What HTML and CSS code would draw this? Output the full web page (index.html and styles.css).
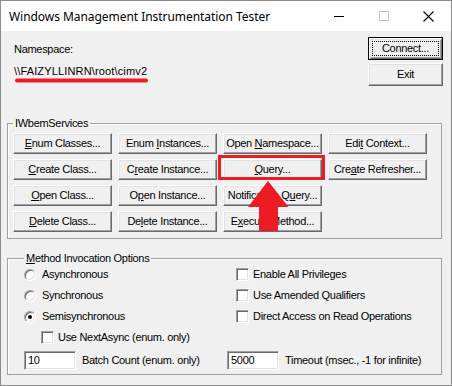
FILE: index.html
```html
<!DOCTYPE html>
<html>
<head>
<meta charset="utf-8">
<link rel="stylesheet" href="styles.css">
</head>
<body>
<div class="window">
  <div class="titlebar">
    <span class="title">Windows Management Instrumentation Tester</span>
    <div class="controls">
      <div class="ctl"><svg width="10" height="10" viewBox="0 0 10 10"><line x1="0" y1="5.5" x2="10" y2="5.5" stroke="#000" stroke-width="1"/></svg></div>
      <div class="ctl"><svg width="10" height="10" viewBox="0 0 10 10"><rect x="0.5" y="0.5" width="9" height="9" fill="none" stroke="#c4c4c4" stroke-width="1"/></svg></div>
      <div class="ctl"><svg width="11" height="11" viewBox="0 0 11 11"><path d="M0.5 0.5 L10.5 10.5 M10.5 0.5 L0.5 10.5" stroke="#000" stroke-width="1.1"/></svg></div>
    </div>
  </div>
  <div class="client">
    <div class="top">
      <div class="ns">
        <div class="ns-label">Namespace:</div>
        <div class="ns-path">\\FAIZYLLINRN\root\cimv2</div>
      </div>
      <div class="side-buttons">
        <button class="btn default"><span>Connect...</span></button>
        <button class="btn"><span>Exit</span></button>
      </div>
    </div>

    <fieldset class="group services">
      <legend>IWbemServices</legend>
      <div class="btn-grid">
        <button class="btn"><span><u>E</u>num Classes...</span></button>
        <button class="btn"><span>Enum <u>I</u>nstances...</span></button>
        <button class="btn"><span>Open <u>N</u>amespace...</span></button>
        <button class="btn"><span>Edi<u>t</u> Context...</span></button>
        <button class="btn"><span><u>C</u>reate Class...</span></button>
        <button class="btn"><span>C<u>r</u>eate Instance...</span></button>
        <button class="btn"><span><u>Q</u>uery...</span></button>
        <button class="btn"><span>Cre<u>a</u>te Refresher...</span></button>
        <button class="btn"><span><u>O</u>pen Class...</span></button>
        <button class="btn"><span>O<u>p</u>en Instance...</span></button>
        <button class="btn"><span>Notification Q<u>u</u>ery...</span></button>
        <span></span>
        <button class="btn"><span><u>D</u>elete Class...</span></button>
        <button class="btn"><span>De<u>l</u>ete Instance...</span></button>
        <button class="btn"><span>E<u>x</u>ecute Method...</span></button>
      </div>
    </fieldset>

    <fieldset class="group options">
      <legend><u>M</u>ethod Invocation Options</legend>
      <div class="opt-rows">
        <div class="opt-row">
          <label class="radio"><span class="rb"></span><span>Asynchronous</span></label>
          <label class="check"><span class="cb"></span><span>Enable All Privileges</span></label>
        </div>
        <div class="opt-row">
          <label class="radio"><span class="rb"></span><span>Synchronous</span></label>
          <label class="check"><span class="cb"></span><span>Use Amended Qualifiers</span></label>
        </div>
        <div class="opt-row">
          <label class="radio"><span class="rb on"></span><span>Semisynchronous</span></label>
          <label class="check"><span class="cb"></span><span>Direct Access on Read Operations</span></label>
        </div>
        <div class="opt-row indent">
          <label class="check"><span class="cb"></span><span>Use NextAsync (enum. only)</span></label>
        </div>
        <div class="edit-row">
          <div class="edit-field"><span class="edit">10</span><span class="edit-label">Batch Count (enum. only)</span></div>
          <div class="edit-field"><span class="edit">5000</span><span class="edit-label">Timeout (msec., -1 for infinite)</span></div>
        </div>
      </div>
    </fieldset>
  </div>

  <svg class="annot" width="452" height="386" viewBox="0 0 452 386">
    <line x1="17" y1="80.5" x2="146" y2="80.5" stroke="#ed1c24" stroke-width="4" stroke-linecap="round"/>
    <rect x="219.5" y="156.5" width="104" height="22" fill="none" stroke="#ed1c24" stroke-width="3"/>
    <polygon points="268,181 288.5,207 278,207 278,231 259,231 259,207 248,207" fill="#ed1c24"/>
  </svg>
</div>
</body>
</html>
```

FILE: styles.css
```css
html, body {
  margin: 0;
  padding: 0;
  background: #ffffff;
}

.window {
  position: relative;
  width: 452px;
  height: 386px;
  box-sizing: border-box;
  border: 1px solid #8c8c8c;
  background: #f0f0f0;
  display: flex;
  flex-direction: column;
  font-family: "Liberation Sans", Arial, sans-serif;
  font-size: 11px;
  letter-spacing: -0.3px;
  color: #000;
  overflow: hidden;
}

.titlebar {
  height: 30px;
  flex-shrink: 0;
  background: #ffffff;
  display: flex;
  align-items: center;
}

.title {
  flex: 1;
  padding-left: 8px;
  font-family: "Noto Sans", "Open Sans", sans-serif;
  font-size: 12px;
  letter-spacing: -0.05px;
  color: #000;
  white-space: nowrap;
}

.controls {
  display: flex;
  height: 30px;
}

.ctl {
  width: 45px;
  height: 30px;
  display: flex;
  align-items: center;
  justify-content: center;
}

.ctl svg {
  display: block;
}

.client {
  flex: 1;
  padding: 0 9px 0 6px;
}

.top {
  display: flex;
  justify-content: space-between;
  padding-top: 6px;
}

.ns {
  padding-left: 7px;
  padding-top: 6px;
  line-height: 13px;
}

.ns-path {
  margin-top: 9px;
  letter-spacing: 0.15px;
}

.side-buttons {
  display: flex;
  flex-direction: column;
  gap: 3px;
  margin-right: -1px;
}

.btn {
  box-sizing: border-box;
  margin: 0;
  padding: 0;
  font: inherit;
  letter-spacing: inherit;
  color: #000;
  background: #f0f0f0;
  border: 1px solid;
  border-color: #ffffff #696969 #696969 #ffffff;
  box-shadow: inset -1px -1px 0 #a0a0a0, inset 1px 1px 0 #e3e3e3;
  display: flex;
  align-items: center;
  justify-content: center;
  white-space: nowrap;
  line-height: 13px;
}

.side-buttons .btn {
  width: 75px;
  height: 23px;
}

.btn.default {
  border-color: #000;
  box-shadow: inset 1px 1px 0 #ffffff, inset -1px -1px 0 #696969, inset 2px 2px 0 #e3e3e3, inset -2px -2px 0 #a0a0a0;
  outline: 1px dotted #000;
  outline-offset: -5px;
}

.btn u {
  text-decoration: underline;
  text-underline-offset: 1px;
}

.group {
  margin: 0;
  min-width: 0;
  border: 1px solid #a0a0a0;
  box-shadow: inset 1px 1px 0 #ffffff;
}

.group legend {
  padding: 0 2px;
  margin-left: 0;
  line-height: 13px;
}

.services {
  margin-top: 31px;
  padding: 3px 5px 6px 5px;
}

.btn-grid {
  display: grid;
  grid-template-columns: repeat(4, 99px);
  grid-auto-rows: 21px;
  column-gap: 6px;
  row-gap: 5px;
}

.options {
  margin-top: 13px;
  padding: 0 0 4px 16px;
}

.opt-rows {
  margin-top: -1px;
}

.opt-row {
  display: grid;
  grid-template-columns: 212px 1fr;
  height: 21px;
  align-items: center;
}

.opt-row.indent {
  padding-left: 17px;
}

.radio, .check {
  display: flex;
  align-items: center;
  line-height: 13px;
  white-space: nowrap;
}

.rb {
  width: 12px;
  height: 12px;
  box-sizing: border-box;
  border-radius: 50%;
  background: #ffffff;
  border: 1px solid;
  border-color: #a0a0a0 #ffffff #ffffff #a0a0a0;
  box-shadow: inset 1px 1px 0 #696969, inset -1px -1px 0 #e3e3e3;
  margin-right: 6px;
  display: flex;
  align-items: center;
  justify-content: center;
}

.rb.on::after {
  content: "";
  width: 4px;
  height: 4px;
  border-radius: 50%;
  background: #000;
}

.cb {
  width: 13px;
  height: 13px;
  box-sizing: border-box;
  background: #ffffff;
  border: 1px solid;
  border-color: #a0a0a0 #ffffff #ffffff #a0a0a0;
  box-shadow: inset 1px 1px 0 #696969, inset -1px -1px 0 #e3e3e3;
  margin-right: 4px;
}

.edit-row {
  display: grid;
  grid-template-columns: 203px 1fr;
  margin-top: 3px;
}

.edit-field {
  display: flex;
  align-items: center;
  white-space: nowrap;
}

.edit {
  width: 52px;
  height: 19px;
  box-sizing: border-box;
  background: #ffffff;
  border: 1px solid;
  border-color: #a0a0a0 #ffffff #ffffff #a0a0a0;
  box-shadow: inset 1px 1px 0 #696969, inset -1px -1px 0 #e3e3e3;
  padding-left: 3px;
  line-height: 17px;
  color: #000;
}

.edit-label {
  margin-left: 6px;
  line-height: 13px;
}

.annot {
  position: absolute;
  left: -1px;
  top: -1px;
  pointer-events: none;
}
```
